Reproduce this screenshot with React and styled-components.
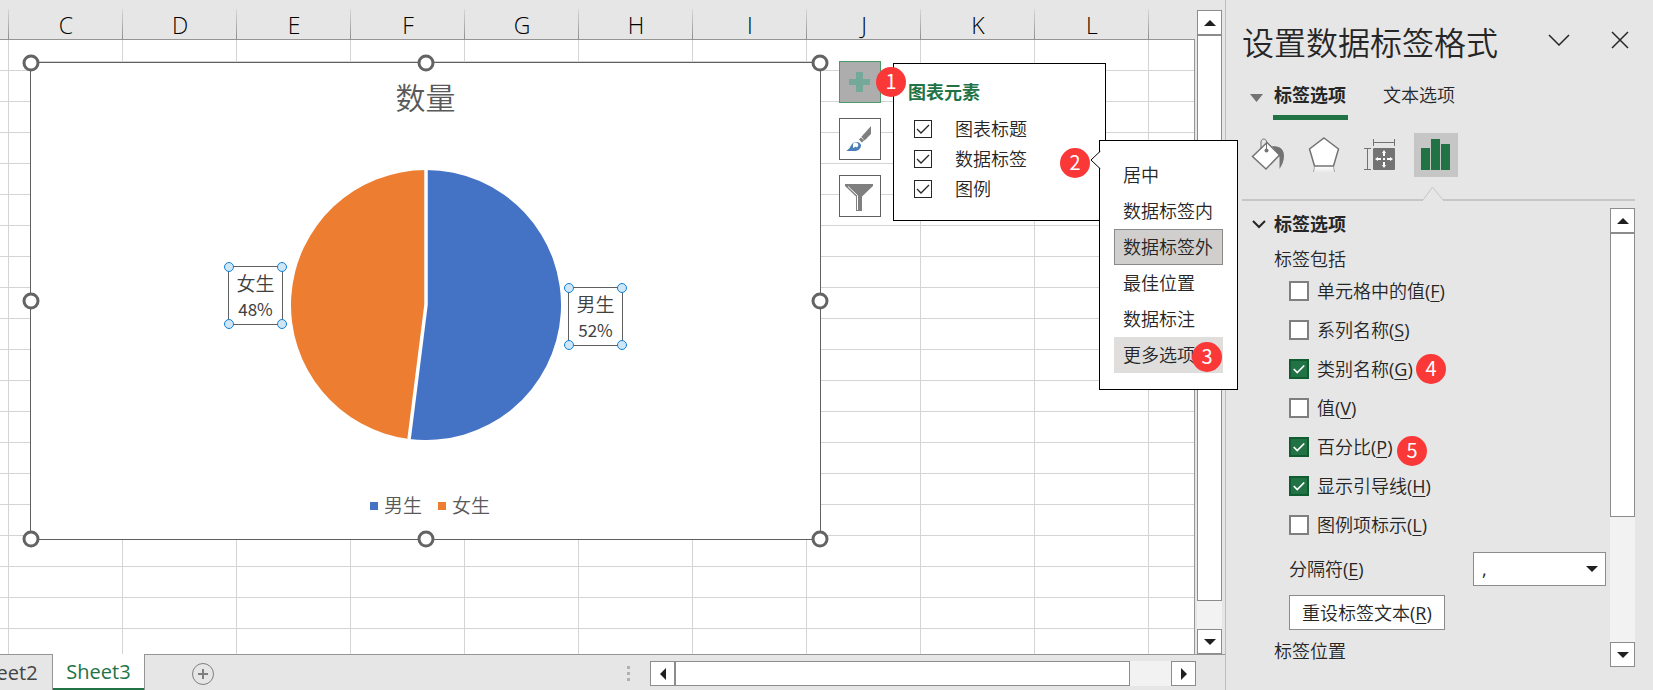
import React, { useState } from 'react';
import styled, { createGlobalStyle, css } from 'styled-components';

const COLUMNS = ['C', 'D', 'E', 'F', 'G', 'H', 'I', 'J', 'K', 'L'];

const CHART_ELEMENTS = ['图表标题', '数据标签', '图例'];

const POSITIONS = ['居中', '数据标签内', '数据标签外', '最佳位置', '数据标注', '更多选项'];

const LABEL_OPTIONS = [
  { name: '单元格中的值', hotkey: 'F', checked: false },
  { name: '系列名称', hotkey: 'S', checked: false },
  { name: '类别名称', hotkey: 'G', checked: true, step: { n: 4, x: 174, y: 5 } },
  { name: '值', hotkey: 'V', checked: false },
  { name: '百分比', hotkey: 'P', checked: true, step: { n: 5, x: 155, y: 9 } },
  { name: '显示引导线', hotkey: 'H', checked: true },
  { name: '图例项标示', hotkey: 'L', checked: false },
];

const tick = (color, width) =>
  `url("data:image/svg+xml,%3Csvg xmlns='http://www.w3.org/2000/svg' viewBox='0 0 16 16'%3E%3Cpath d='M2 8l4 4 8-8' fill='none' stroke='%23${color}' stroke-width='${width}'/%3E%3C/svg%3E")`;

const GlobalStyle = createGlobalStyle`
  * { box-sizing: border-box; }
  body {
    margin: 0;
    background: #e6e6e6;
    color: #262626;
    font-family: 'Open Sans', 'Noto Sans CJK SC', sans-serif;
    font-size: 18px;
    line-height: 24px;
    overflow: hidden;
  }
  button, select, input { font: inherit; color: inherit; margin: 0; }
  button { padding: 0; border: none; background: none; cursor: pointer; }
  svg { display: block; }
`;

const Window = styled.div`
  display: flex;
  height: 100vh;
`;

const Workbook = styled.main`
  flex: 1;
  min-width: 0;
  display: flex;
  flex-direction: column;
`;

const SheetRow = styled.div`
  flex: 1;
  min-height: 0;
  display: flex;
  gap: 2px;
  padding-right: 3px;
`;

const Sheet = styled.div`
  flex: 1;
  min-width: 0;
  display: flex;
  flex-direction: column;
`;

const ColumnHeaders = styled.div`
  display: flex;
  height: 40px;
  overflow: hidden;
  border-bottom: 1px solid #959595;
`;

const ColumnHeader = styled.div`
  flex: none;
  width: ${(p) => (p.$partial ? 9 : 114)}px;
  padding-top: 11px;
  text-align: center;
  font-size: 23px;
  line-height: 28px;
  font-weight: 350;
  color: #000;
  background: linear-gradient(#d8d8d8, #8f8f8f) right 9px / 1px 30px no-repeat;
`;

const Cells = styled.div`
  flex: 1;
  position: relative;
  border-right: 1px solid #959595;
  background-color: #fff;
  background-image:
    linear-gradient(to right, transparent 113px, #d4d4d4 113px),
    linear-gradient(to bottom, transparent 30px, #d4d4d4 30px);
  background-size: 114px 100%, 100% 31px;
  background-position: 9px 0, 0 0;
`;

const ChartObject = styled.section`
  position: absolute;
  left: 30px;
  top: 22px;
  width: 791px;
  height: 478px;
  display: flex;
  flex-direction: column;
  align-items: center;
  background: #fff;
  border: 1px solid #606060;
  box-shadow: 0 -1px 0 #d4d4d4;
`;

const ChartTitle = styled.h1`
  margin: 15px 0 0;
  font-size: 30px;
  line-height: 40px;
  font-weight: 350;
  color: #595959;
`;

const Pie = styled.svg`
  width: 270px;
  height: 270px;
  margin-top: 52px;
`;

const Legend = styled.div`
  display: flex;
  gap: 16px;
  margin: 54px 0 0 9px;
`;

const LegendItem = styled.span`
  display: flex;
  align-items: center;
  gap: 6px;
  font-size: 19px;
  font-weight: 350;
  color: #595959;
  &::before {
    content: '';
    width: 8px;
    height: 8px;
    background: ${(p) => p.$color};
  }
`;

const HandleDot = styled.i`
  position: absolute;
  left: ${(p) => p.$x};
  top: ${(p) => p.$y};
  border-radius: 50%;
  transform: translate(-50%, -50%);
  ${(p) =>
    p.$small
      ? css`
          width: 10px;
          height: 10px;
          border: 1px solid #0f7fd6;
          background: #cfe6f7;
        `
      : css`
          width: 17px;
          height: 17px;
          border: 3px solid #636363;
          background: #fff;
        `}
`;

const DataLabel = styled.div`
  position: absolute;
  left: ${(p) => p.$x}px;
  top: ${(p) => p.$y}px;
  width: 55px;
  height: 59px;
  padding-top: 3px;
  border: 1px solid #606060;
  text-align: center;
  font-family: 'Noto Sans CJK SC', sans-serif;
  font-size: 17px;
  line-height: 26px;
  color: #404040;
`;

const Category = styled.div`
  font-size: 19px;
  font-weight: 350;
`;

const ChartTools = styled.div`
  position: absolute;
  left: 808px;
  top: -2px;
  display: flex;
  flex-direction: column;
  gap: 15px;
`;

const ToolButton = styled.button`
  width: 42px;
  height: 42px;
  border: 1px solid ${(p) => (p.$active ? '#4a9a6c' : '#606060')};
  background: ${(p) => (p.$active ? '#adadad' : '#fff')};
`;

const ElementsFlyout = styled.div`
  position: absolute;
  left: 862px;
  top: 0;
  width: 213px;
  height: 158px;
  padding: 15px 0 0 14px;
  background: #fff;
  border: 1px solid #000;
`;

const FlyoutTitle = styled.h2`
  margin: 0 0 9px;
  font-size: 18px;
  line-height: 26px;
  color: #217346;
`;

const ElementRow = styled.label`
  display: flex;
  align-items: center;
  gap: 23px;
  height: 30px;
  padding-left: 6px;
  font-weight: 350;
`;

const ElementCheck = styled.input`
  appearance: none;
  width: 18px;
  height: 18px;
  border: 1px solid #262626;
  background: #fff;
  &:checked { background-image: ${tick('262626', '1.3')}; }
`;

const PositionMenu = styled.div`
  position: absolute;
  left: 1068px;
  top: 77px;
  width: 139px;
  padding: 16px 14px;
  background: #fff;
  border: 1px solid #000;
`;

const MenuPointer = styled.svg`
  position: absolute;
  left: -10px;
  top: 10px;
`;

const MenuItem = styled.button`
  display: block;
  width: 100%;
  height: 36px;
  padding-left: 8px;
  text-align: left;
  font-weight: 350;
  white-space: nowrap;
  border: 1px solid transparent;
  ${(p) => p.$selected && css`border-color: #8a8a8a; background: #d0cfce;`}
  ${(p) => p.$hovered && css`border-color: #dfdedd; background: #dfdedd;`}
`;

const Badge = styled.span`
  position: absolute;
  left: ${(p) => p.$x}px;
  top: ${(p) => p.$y}px;
  width: 30px;
  height: 30px;
  border-radius: 50%;
  background: #fb3838;
  color: #fff;
  font-family: 'Noto Sans CJK SC', sans-serif;
  font-size: 20px;
  font-weight: 400;
  line-height: 28px;
  text-align: center;
`;

const Scroll = styled.div`
  flex: none;
  display: flex;
  background: #f2f2f2;
  ${(p) =>
    p.$horizontal
      ? css`
          width: 546px;
          height: 25px;
          margin-top: 6px;
        `
      : css`
          flex-direction: column;
          width: 25px;
          margin-top: ${p.$top}px;
        `}
`;

const ScrollButton = styled.button`
  flex: none;
  display: flex;
  align-items: center;
  justify-content: center;
  width: 25px;
  height: 25px;
  background: #fff;
  border: 1px solid #8c8c8c;
`;

const Thumb = styled.div`
  flex: ${(p) => p.$size} 1 0;
  background: #fff;
  border: 1px solid #8c8c8c;
`;

const Track = styled.div`
  flex: ${(p) => p.$size} 1 0;
`;

const TabBar = styled.footer`
  flex: none;
  display: flex;
  height: 36px;
  padding-right: 29px;
  border-top: 1px solid #959595;
`;

/* scrolled so that only the end of the first tab shows */
const Tabs = styled.nav`
  flex: 1;
  display: flex;
  margin-left: -41px;
`;

const SheetTab = styled.button`
  width: 93px;
  font-size: 20px;
  color: #444;
  ${(p) =>
    p.$active &&
    css`
      margin-top: -1px;
      color: #217346;
      background: #fff;
      border: solid #959595;
      border-width: 0 1px;
      box-shadow: inset 0 -2px 0 #217346;
    `}
`;

const AddSheet = styled.button`
  margin: 2px 0 0 46px;
`;

const Splitter = styled.div`
  display: flex;
  flex-direction: column;
  gap: 3px;
  padding: 11px 20px 0 0;
  i {
    width: 3px;
    height: 3px;
    background: #b0b0b0;
  }
`;

const Pane = styled.aside`
  flex: none;
  width: 428px;
  display: flex;
  flex-direction: column;
  padding: 20px 18px 23px 16px;
  border-left: 1px solid #bdbdbd;
`;

const PaneHeader = styled.header`
  display: flex;
  align-items: center;
  height: 46px;
  padding-bottom: 6px;
`;

const PaneTitle = styled.h2`
  flex: 1;
  margin: 0;
  padding-top: 6px;
  font-size: 32px;
  line-height: 46px;
  font-weight: 350;
  white-space: nowrap;
`;

const HeaderButton = styled.button`
  height: 40px;
  margin-left: 29px;
  padding: 0 6px;
`;

const PaneTabs = styled.div`
  display: flex;
  align-items: flex-start;
  height: 44px;
  margin-top: 10px;
  padding-left: 8px;
`;

const PaneTab = styled.button`
  padding: 7px 2px 8px 1px;
  margin: 0 33px 0 10px;
  font-weight: 350;
  white-space: nowrap;
  border-bottom: 5px solid transparent;
  ${(p) => p.$active && css`
    margin-right: 24px;
    font-weight: 700;
    border-color: #217346;
  `}
`;

const TabArrow = styled.svg`
  margin-top: 18px;
`;

const Categories = styled.div`
  display: flex;
  gap: 12px;
  margin-top: 13px;
  padding-left: 4px;
`;

const CategoryButton = styled.button`
  width: 44px;
  height: 44px;
  background: ${(p) => (p.$active ? '#c6c6c6' : 'none')};
`;

const Divider = styled.div`
  display: flex;
  align-items: flex-end;
  height: 14px;
  margin-top: 10px;
  &::before, &::after {
    content: '';
    height: 2px;
    background: #c6c6c6;
  }
  &::before { width: 181px; }
  &::after { flex: 1; }
`;

const PaneBody = styled.div`
  flex: 1;
  display: flex;
  gap: 4px;
`;

const Form = styled.form`
  flex: 1;
  display: flex;
  flex-direction: column;
  padding-top: 11px;
  font-weight: 350;
`;

const SectionTitle = styled.h3`
  display: flex;
  align-items: center;
  gap: 8px;
  margin: 0;
  padding-left: 10px;
  font-size: 18px;
  line-height: 24px;
`;

const FieldLabel = styled.div`
  padding-left: 32px;
  margin-top: ${(p) => p.$gap}px;
`;

const OptionRow = styled.div`
  position: relative;
  display: flex;
  align-items: center;
  height: 39px;
  padding-left: 47px;
`;

const OptionLabel = styled.label`
  display: flex;
  align-items: center;
  gap: 8px;
`;

const OptionCheck = styled.input`
  appearance: none;
  width: 20px;
  height: 20px;
  border: 2px solid #7f7f7f;
  background: #fff;
  &:checked {
    border-color: #0e5c2f;
    background: #217346 ${tick('fff', 2)} center / 14px no-repeat;
  }
`;

const HotkeyText = styled.span`
  font-weight: 400;
  u { text-underline-offset: 3px; }
`;

const SeparatorRow = styled.div`
  display: flex;
  align-items: center;
  justify-content: space-between;
  margin-top: 8px;
  padding-left: 47px;
`;

const SelectBox = styled.div`
  display: grid;
  align-items: center;
  width: 133px;
  > * { grid-area: 1 / 1; }
  > svg {
    justify-self: end;
    margin-right: 8px;
    pointer-events: none;
  }
`;

const Select = styled.select`
  appearance: none;
  width: 100%;
  height: 34px;
  padding: 0 8px;
  font-weight: 400;
  border: 1px solid #8c8c8c;
  border-radius: 0;
  background: #fff;
`;

const ResetButton = styled.button`
  align-self: flex-start;
  height: 35px;
  margin: 9px 0 0 47px;
  padding: 0 12px;
  border: 1px solid #8c8c8c;
  background: #fff;
`;

const ARROWS = {
  up: 'M0 6L6 0L12 6Z',
  down: 'M0 0L12 0L6 6Z',
  left: 'M6 0L0 6L6 12Z',
  right: 'M0 0L6 6L0 12Z',
};

function Arrow({ dir }) {
  const flat = dir === 'up' || dir === 'down';
  return (
    <svg width={flat ? 12 : 6} height={flat ? 6 : 12} fill="#1f1f1f">
      <path d={ARROWS[dir]} />
    </svg>
  );
}

function Hotkey({ letter }) {
  return <HotkeyText>(<u>{letter}</u>)</HotkeyText>;
}

function ScrollBar({ horizontal, top, thumb, rest }) {
  return (
    <Scroll $horizontal={horizontal} $top={top}>
      <ScrollButton type="button" aria-label={horizontal ? '向左' : '向上'}>
        <Arrow dir={horizontal ? 'left' : 'up'} />
      </ScrollButton>
      <Thumb $size={thumb} />
      <Track $size={rest} />
      <ScrollButton type="button" aria-label={horizontal ? '向右' : '向下'}>
        <Arrow dir={horizontal ? 'right' : 'down'} />
      </ScrollButton>
    </Scroll>
  );
}

function Handles({ small }) {
  const stops = small ? ['0%', '100%'] : ['0%', '50%', '100%'];
  return stops.flatMap((x) =>
    stops
      .filter((y) => !(x === '50%' && y === '50%'))
      .map((y) => <HandleDot key={x + y} $x={x} $y={y} $small={small} />)
  );
}

function PieChart() {
  // 52% of the circle, clockwise from the top
  const angle = 0.52 * 2 * Math.PI;
  const x = 135 + 135 * Math.sin(angle);
  const y = 135 - 135 * Math.cos(angle);
  return (
    <Pie viewBox="0 0 270 270">
      <path d={`M135 135V0A135 135 0 1 1 ${x} ${y}Z`} fill="#4472c4" />
      <path d={`M135 135L${x} ${y}A135 135 0 0 1 135 0Z`} fill="#ed7d31" />
      <path d={`M135 0V135L${x} ${y}`} fill="none" stroke="#fff" strokeWidth="3.500" />
    </Pie>
  );
}

function Chart() {
  return (
    <ChartObject>
      <ChartTitle>数量</ChartTitle>
      <PieChart />
      <Legend>
        <LegendItem $color="#4472c4">男生</LegendItem>
        <LegendItem $color="#ed7d31">女生</LegendItem>
      </Legend>
      <DataLabel $x={197} $y={203}>
        <Category>女生</Category>
        48%
        <Handles small />
      </DataLabel>
      <DataLabel $x={537} $y={224}>
        <Category>男生</Category>
        52%
        <Handles small />
      </DataLabel>
      <Handles />
      <ChartMenus />
    </ChartObject>
  );
}

function ChartMenus() {
  return (
    <>
      <ChartTools>
        <ToolButton $active aria-label="图表元素">
          <svg width="40" height="40" fill="#74a898">
            <path d="M16 10h7v7h7v6h-7v7h-7v-7H9v-6h7z" />
          </svg>
        </ToolButton>
        <ToolButton aria-label="图表样式">
          <svg width="40" height="40">
            <path d="M31 7v8l-5 5-3-4z" fill="#7f7f7f" />
            <path d="M22.500 16.500l3 4M20 19.500l3 3" stroke="#7f7f7f" strokeWidth="3" />
            <path d="M6 32c4-2 4-5 7-8 3-2 7-1 8 2 0 4-3 6-7 6z" fill="#4a7fb8" />
            <path d="M13 25c1-2 4-2 5 0s-1 4-2 3-2 1-3 1z" fill="#fff" />
          </svg>
        </ToolButton>
        <ToolButton aria-label="图表筛选器">
          <svg width="40" height="40">
            <path d="M5 8h28v2L22 20.500V35h-6V20.500L5 10z" fill="#7f7f7f" />
            <path d="M8 10.500l9.500 9V34" fill="none" stroke="#fff" />
          </svg>
        </ToolButton>
      </ChartTools>
      <ElementsFlyout>
        <FlyoutTitle>图表元素</FlyoutTitle>
        {CHART_ELEMENTS.map((name) => (
          <ElementRow key={name}>
            <ElementCheck type="checkbox" defaultChecked />
            {name}
          </ElementRow>
        ))}
      </ElementsFlyout>
      <PositionMenu>
        <MenuPointer width="11" height="18">
          <path d="M10.500 0L1 9l9.500 9" fill="#fff" stroke="#000" />
          <path d="M10.500 1v16" stroke="#fff" />
        </MenuPointer>
        {POSITIONS.map((name) => (
          <MenuItem key={name} $selected={name === '数据标签外'} $hovered={name === '更多选项'}>
            {name}
          </MenuItem>
        ))}
      </PositionMenu>
      <Badge $x={845} $y={4}>1</Badge>
      <Badge $x={1029} $y={85}>2</Badge>
      <Badge $x={1161} $y={279}>3</Badge>
    </>
  );
}

function CategoryIcons() {
  return (
    <Categories>
      <CategoryButton aria-label="填充与线条">
        <svg width="44" height="44">
          <path d="M26 13c9 0 12 4 12 10 0 5-2 9-4.500 13V24z" fill="#737373" />
          <path d="M6.500 23.500L21 9.500 33.500 22 20 36z" fill="#fff" stroke="#737373" strokeWidth="1.500" />
          <path d="M15 16V9c0-4 5.500-4 5.500 0v8" fill="none" stroke="#737373" />
          <circle cx="20.500" cy="17.500" r="2" fill="#737373" />
        </svg>
      </CategoryButton>
      <CategoryButton aria-label="效果">
        <svg width="44" height="44">
          <defs>
            <linearGradient id="reflection" x2="0" y2="1">
              <stop stopColor="#fff" />
              <stop offset="1" stopColor="#fff" stopOpacity="0" />
            </linearGradient>
          </defs>
          <path d="M13 33h18l2 7H11z" fill="url(#reflection)" />
          <path d="M12.500 34l-1 5M31.500 34l1 5" stroke="#a8a8a8" />
          <path d="M22 5l14.500 11-5 17h-19l-5-17z" fill="#fff" stroke="#737373" strokeWidth="1.500" />
        </svg>
      </CategoryButton>
      <CategoryButton aria-label="大小与属性">
        <svg width="44" height="44">
          <path
            d="M15.500 6v7M36.500 6v7M15.500 9.500h21M6 15.500h7M6 36.500h7M9.500 15.500v21"
            stroke="#737373"
          />
          <rect x="15" y="15" width="22" height="22" rx="1" fill="#737373" />
          <path
            d="M26 17l2 3h-1v3h-2v-3h-1zM26 35l2-3h-1v-3h-2v3h-1zM17 26l3-2v1h3v2h-3v1zM35 26l-3-2v1h-3v2h3v1zM25 25h2v2h-2z"
            fill="#fff"
          />
        </svg>
      </CategoryButton>
      <CategoryButton $active aria-label="标签选项">
        <svg width="44" height="44" fill="#217346">
          <path d="M7 15h9v22H7zM17 6h9v31h-9zM27 11h9v26h-9z" />
        </svg>
      </CategoryButton>
    </Categories>
  );
}

function FormatPane() {
  const [options, setOptions] = useState(LABEL_OPTIONS);

  const toggle = (hotkey) => {
    setOptions(options.map((o) => (o.hotkey === hotkey ? { ...o, checked: !o.checked } : o)));
  };

  return (
    <Pane>
      <PaneHeader>
        <PaneTitle>设置数据标签格式</PaneTitle>
        <HeaderButton aria-label="任务窗格选项">
          <svg width="22" height="12" fill="none" stroke="#262626" strokeWidth="1.500">
            <path d="M1 1l10 10L21 1" />
          </svg>
        </HeaderButton>
        <HeaderButton aria-label="关闭">
          <svg width="18" height="18" fill="none" stroke="#262626" strokeWidth="1.500">
            <path d="M1 1l16 16M17 1L1 17" />
          </svg>
        </HeaderButton>
      </PaneHeader>
      <PaneTabs>
        <TabArrow width="13" height="8" fill="#737373">
          <path d="M0 0h13L6.500 8z" />
        </TabArrow>
        <PaneTab $active>标签选项</PaneTab>
        <PaneTab>文本选项</PaneTab>
      </PaneTabs>
      <CategoryIcons />
      <Divider>
        <svg width="20" height="15" fill="none" stroke="#c6c6c6">
          <path d="M0 14L9.500 1 20 14" />
        </svg>
      </Divider>
      <PaneBody>
        <Form onSubmit={(e) => e.preventDefault()}>
          <SectionTitle>
            <svg width="14" height="9" fill="none" stroke="#262626" strokeWidth="2">
              <path d="M1 1l6 6 6-6" />
            </svg>
            标签选项
          </SectionTitle>
          <FieldLabel $gap={11}>标签包括</FieldLabel>
          {options.map((o) => (
            <OptionRow key={o.hotkey}>
              <OptionLabel>
                <OptionCheck type="checkbox" checked={o.checked} onChange={() => toggle(o.hotkey)} />
                <span>{o.name}<Hotkey letter={o.hotkey} /></span>
              </OptionLabel>
              {o.step && <Badge $x={o.step.x} $y={o.step.y}>{o.step.n}</Badge>}
            </OptionRow>
          ))}
          <SeparatorRow>
            <label htmlFor="separator">分隔符<Hotkey letter="E" /></label>
            <SelectBox>
              <Select id="separator" defaultValue=",">
                <option value=",">,</option>
                <option value=";">;</option>
              </Select>
              <Arrow dir="down" />
            </SelectBox>
          </SeparatorRow>
          <ResetButton type="button">重设标签文本<Hotkey letter="R" /></ResetButton>
          <FieldLabel $gap={9}>标签位置</FieldLabel>
        </Form>
        <ScrollBar top={7} thumb={9} rest={4} />
      </PaneBody>
    </Pane>
  );
}

export default function App() {
  return (
    <>
      <GlobalStyle />
      <Window>
        <Workbook>
          <SheetRow>
            <Sheet>
              <ColumnHeaders>
                <ColumnHeader $partial />
                {COLUMNS.map((c) => (
                  <ColumnHeader key={c}>{c}</ColumnHeader>
                ))}
              </ColumnHeaders>
              <Cells>
                <Chart />
              </Cells>
            </Sheet>
            <ScrollBar top={10} thumb={20} rest={1} />
          </SheetRow>
          <TabBar>
            <Tabs>
              <SheetTab>Sheet2</SheetTab>
              <SheetTab $active>Sheet3</SheetTab>
              <AddSheet aria-label="新工作表">
                <svg width="24" height="24" fill="none" stroke="#7f7f7f">
                  <circle cx="12" cy="12" r="10.500" />
                  <path d="M12 7v10M7 12h10" strokeWidth="2" />
                </svg>
              </AddSheet>
            </Tabs>
            <Splitter>
              <i />
              <i />
              <i />
            </Splitter>
            <ScrollBar horizontal thumb={11} rest={1} />
          </TabBar>
        </Workbook>
        <FormatPane />
      </Window>
    </>
  );
}
